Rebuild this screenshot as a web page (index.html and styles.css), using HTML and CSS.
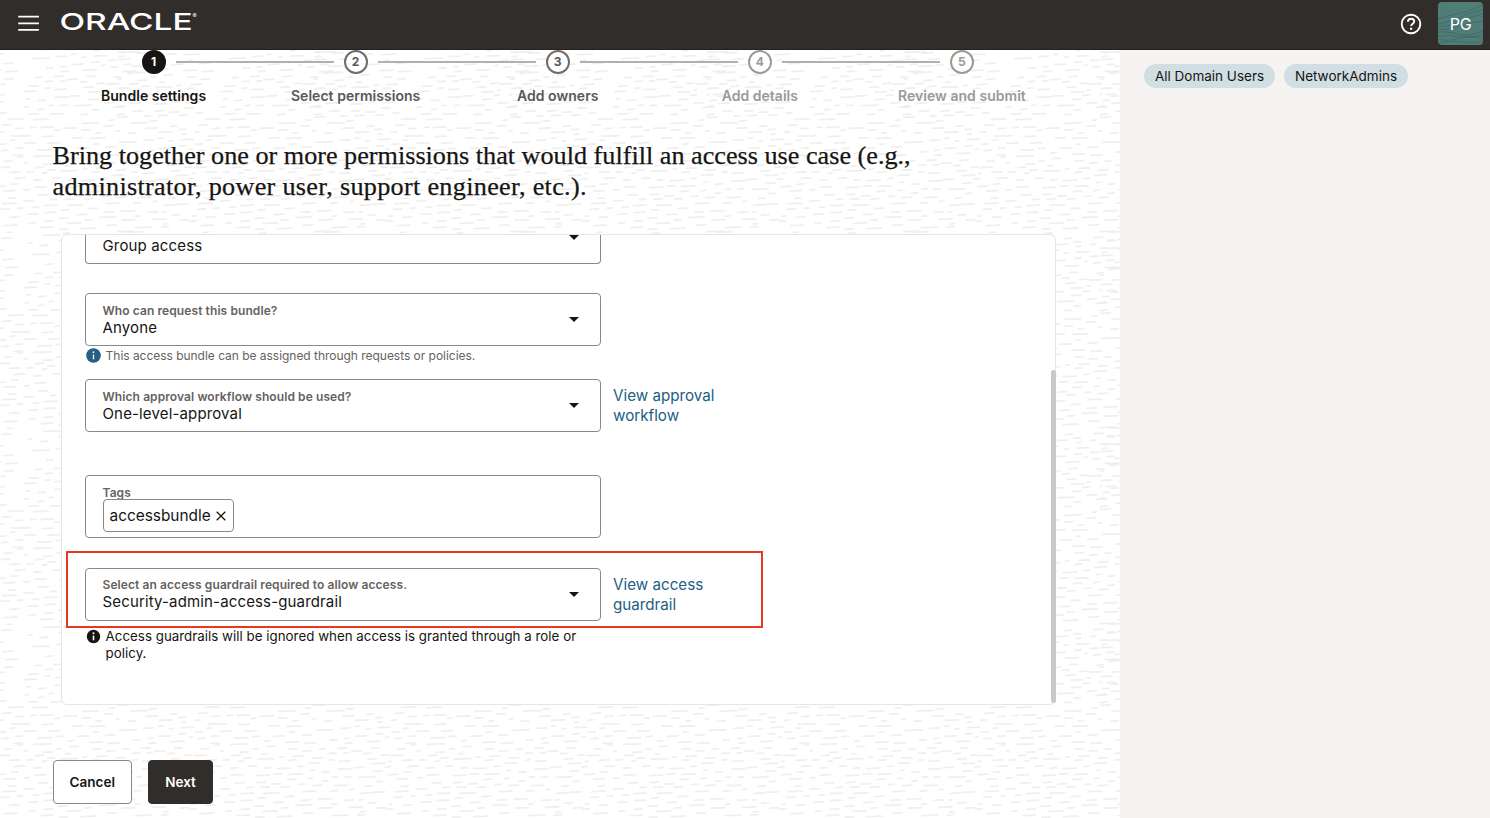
FILE: index.html
```
<!DOCTYPE html>
<html lang="en">
<head>
<meta charset="utf-8">
<title>Create access bundle</title>
<link rel="stylesheet" href="styles.css">
</head>
<body>
<header class="topbar">
  <svg class="menu" width="22" height="16" viewBox="0 0 22 16"><path d="M.2 1.7h20.700M.2 8.300h20.700M.2 14.900h20.700" stroke="#fff" stroke-width="1.700"/></svg>
  <svg class="logo" width="137" height="22" viewBox="0 0 137 22" fill="#fff"><text class="word" x="-1.500" y="18.700" textLength="133" lengthAdjust="spacingAndGlyphs">ORACLE</text><text class="reg" x="131.500" y="6.500">®</text></svg>
  <svg class="help" width="22" height="22" viewBox="0 0 22 22" fill="none" stroke="#fff" stroke-width="1.900"><circle cx="11" cy="11" r="9.300"/><path d="M7.900 8.800C8 6.800 9.300 5.700 11.100 5.700c1.900 0 3.100 1.100 3.100 2.700 0 2.300-3 2.300-3 4.700"/><circle cx="11.100" cy="15.700" r="1.200" fill="#fff" stroke="none"/></svg>
  <div class="avatar">
    <svg width="45" height="43" viewBox="0 0 45 43" fill="none" stroke="#426c68" stroke-width="1"><path d="M0 22q12-2 22-7t23-7M0 25q14-1 24-6t21-7M0 17q9-3 19-5t26-9M0 28q12 0 22-4t23-5M0 30q10-1 20 2t25-3M0 34q14-1 25 1t20-3M0 37q10 3 22-1t23 1M0 41q14-3 25-1t20-1"/></svg>
    <span>PG</span>
  </div>
</header>
<div class="page">
  <main class="main">
    <svg class="texture" width="1120" height="768"><defs><pattern id="dashes" x="220" y="656" width="196.500" height="196" patternUnits="userSpaceOnUse"></pattern></defs><rect width="1120" height="768" fill="url(#dashes)"/></svg>
    <ol class="steps">
      <li class="step current"><span class="num">1</span><span class="name">Bundle settings</span></li>
      <li class="step"><span class="num">2</span><span class="name">Select permissions</span></li>
      <li class="step"><span class="num">3</span><span class="name">Add owners</span></li>
      <li class="step later"><span class="num">4</span><span class="name">Add details</span></li>
      <li class="step later"><span class="num">5</span><span class="name">Review and submit</span></li>
    </ol>
    <h1 class="title"><span class="l1">Bring together one or more permissions that would fulfill an access use case (e.g.,</span><br><span class="l2">administrator, power user, support engineer, etc.).</span></h1>
    <section class="card">
      <div class="field cut"><span class="value">Group access</span><i class="arrow"></i></div>
      <div class="field who"><span class="label">Who can request this bundle?</span><span class="value">Anyone</span><i class="arrow"></i></div>
      <p class="hint"><svg width="15" height="15" viewBox="0 0 15 15"><circle cx="7.500" cy="7.500" r="7.300" fill="#226084"/><path d="M7.500 6.500v4.800" stroke="#fff" stroke-width="1.300"/><circle cx="7.500" cy="4.200" r=".9" fill="#fff"/></svg><span>This access bundle can be assigned through requests or policies.</span></p>
      <div class="row">
        <div class="field"><span class="label">Which approval workflow should be used?</span><span class="value">One-level-approval</span><i class="arrow"></i></div>
        <a class="link">View approval<br>workflow</a>
      </div>
      <div class="field tags"><span class="label">Tags</span><span class="tag"><span>accessbundle</span><svg width="10" height="10" viewBox="0 0 10 10"><path d="M.7.7l8.600 8.600M9.300.7L.7 9.300" stroke="#161513" stroke-width="1.300"/></svg></span></div>
      <div class="highlight row">
        <div class="field"><span class="label">Select an access guardrail required to allow access.</span><span class="value">Security-admin-access-guardrail</span><i class="arrow"></i></div>
        <a class="link">View access<br>guardrail</a>
      </div>
      <p class="hint dark"><svg width="15" height="15" viewBox="0 0 15 15"><circle cx="7.500" cy="7.500" r="6.700" fill="#161513"/><path d="M7.500 6.500v4.800" stroke="#fff" stroke-width="1.600"/><circle cx="7.500" cy="4.200" r="1" fill="#fff"/></svg><span>Access guardrails will be ignored when access is granted through a role or<br>policy.</span></p>
      <i class="thumb"></i>
    </section>
    <div class="actions"><button class="btn">Cancel</button><button class="btn primary">Next</button></div>
  </main>
  <aside class="side"><span class="chip">All Domain Users</span><span class="chip c2">NetworkAdmins</span></aside>
</div>
<script src="texture.js"></script>
</body>
</html>
```
FILE: styles.css
```
* { box-sizing: border-box; }
body { margin: 0; width: 1490px; height: 818px; overflow: hidden; font-family: Inter, "Liberation Sans", sans-serif; color: #161513; background: #fff; }
.topbar { display: flex; height: 50px; background: #312d2a; padding-left: 18px; border-bottom: 1px solid #24211f; }
.menu { margin-top: 15px; }
.logo { margin: 11px 0 0 21px; overflow: visible; }
.word { font: 500 23.4px Inter, sans-serif; }
.reg { font: 6px Inter, sans-serif; }
.help { margin: 12.5px 16px 0 auto; }
.avatar { display: grid; place-items: center; width: 45px; height: 43px; margin: 2px 7px 0 0; border-radius: 4px; background: #517d79; overflow: hidden; color: #fff; font-size: 16px; }
.avatar > * { grid-area: 1 / 1; }
.avatar span { z-index: 1; letter-spacing: -.3px; }
.page { display: flex; height: 768px; }
.main { position: relative; width: 1120px; overflow: hidden; display: flex; flex-direction: column; }
.texture { position: absolute; inset: 0; }
.main > :not(.texture) { position: relative; }
.steps { display: flex; list-style: none; margin: 0 0 0 52.5px; padding: 0; height: 62px; }
.step { position: relative; width: 202.1px; display: flex; flex-direction: column; align-items: center; color: #5a5856; }
.num { width: 24px; height: 24px; border: 2px solid #6f6d6b; border-radius: 50%; background: #fff; font-size: 12px; font-weight: 700; line-height: 20px; text-align: center; }
.name { margin-top: 13px; font-size: 14px; line-height: 18px; font-weight: 600; letter-spacing: .03px; white-space: nowrap; }
.step:not(:last-child)::after { content: ""; position: absolute; top: 10.5px; left: 123px; width: 158px; height: 2px; background: #b1b0af; }
.current { color: #161513; }
.current .num { background: #161513; border-color: #161513; color: #fff; }
.later { color: #9b9a99; }
.later .num { border-color: #9b9a99; }
.title { margin: 28px 0 0 52.5px; font: 400 26.2px/31px "Liberation Serif", serif; -webkit-text-stroke: .25px #161513; white-space: nowrap; }
.l2 { letter-spacing: .3px; }
.card { width: 995px; height: 471px; margin: 32px 0 0 60.5px; padding-left: 23.5px; border: 1px solid #e6e6e5; border-radius: 6px; background: #fff; }
.field { position: relative; display: flex; flex-direction: column; width: 516px; height: 53px; padding: 9px 16px 0 16.5px; border: 1px solid #8b8988; border-radius: 4px; }
.cut { height: 29px; padding-top: 1px; border-top: 0; border-radius: 0 0 4px 4px; }
.who { margin-top: 29px; }
.label { font-size: 12px; line-height: 15px; font-weight: 600; letter-spacing: .09px; color: #65625f; white-space: nowrap; }
.value { font-size: 15px; line-height: 19px; letter-spacing: .15px; white-space: nowrap; }
.arrow { position: absolute; right: 21px; top: 23px; border: 5px solid transparent; border-top-color: #161513; border-bottom: 0; }
.cut .arrow { top: 0; }
.hint { display: flex; gap: 5px; margin: 1px 0 0; padding-left: .6px; font-size: 12px; line-height: 17px; letter-spacing: -.03px; color: #65625f; white-space: nowrap; }
.hint svg { margin-top: 1px; }
.row { display: flex; gap: 12px; }
.row:not(.highlight) { margin-top: 15px; }
.link { margin-top: 7px; color: #226084; font-size: 15.2px; line-height: 20px; white-space: nowrap; }
.tags { height: 63px; margin-top: 43px; padding-top: 9px; }
.tag { display: flex; align-items: center; gap: 5.500px; width: 131px; height: 33px; margin-top: -1px; border: 1px solid #8b8988; border-radius: 4px; padding-left: 6px; font-size: 15.4px; }
.highlight { width: 697px; height: 77px; margin: 13px 0 0 -19px; padding: 15px 0 0 17px; border: 2px solid #e8391f; }
.highlight .field { padding-top: 8px; }
.dark { margin-top: 0; font-size: 13.3px; letter-spacing: .03px; color: #161513; }
.thumb { position: absolute; right: -1px; top: 135px; width: 5px; height: 333px; border-radius: 3px; background: #c9c9c9; }
.actions { display: flex; gap: 16px; margin: 55px 0 0 52.5px; }
.btn { width: 79.5px; height: 44px; padding: 0; border: 1px solid #8b8988; border-radius: 4px; background: #fff; color: #161513; font: 600 13.5px Inter, sans-serif; }
.primary { width: 65px; background: #312d2a; border-color: #312d2a; color: #fff; }
.side { width: 370px; padding: 14px 24px; background: #f5f4f2; display: flex; gap: 9px; }
.chip { height: 24px; width: 131px; border-radius: 12px; background: #d1dee4; font-size: 13.5px; line-height: 24px; text-align: center; white-space: nowrap; }
.c2 { width: 124px; }
```
FILE: texture.js
```
// Short strokes of the background tile: x, y, length, in thirds of a pixel.
var strokes = [
  [30,4,44],[258,6,14],[322,14,50],[176,15,48],[380,8,20],[545,3,46],[242,23,26],[440,24,20],[526,21,26],
  [22,28,16],[52,27,36],[120,30,40],[94,36,14],[176,35,24],[368,30,34],[278,38,10],[466,34,20],[566,31,24],
  [218,44,14],[314,45,22],[406,42,40],[514,42,16],[474,48,12],[556,53,52],[0,53,18],[56,55,32],[148,59,28],
  [200,60,44],[404,60,14],[362,66,28],[474,64,36],[438,68,10],[550,66,14],[0,75,36],[76,74,32],[288,72,50],
  [210,78,14],[516,78,20],[468,83,20],[44,95,40],[98,91,20],[162,90,32],[246,87,28],[408,90,32],[566,90,20],
  [498,93,8],[524,97,20],[134,104,16],[330,101,20],[374,97,14],[198,108,38],[254,111,34],[442,106,38],[560,111,40],
  [32,114,50],[376,111,20],[574,117,12],[140,121,24],[100,128,14],[208,128,24],[298,129,18],[354,126,26],[452,126,24],
  [534,128,20],[0,134,10],[60,138,26],[250,134,24],[394,135,30],[328,141,20],[372,140,14],[432,142,20],[126,143,14],
  [36,148,24],[220,150,30],[484,147,20],[512,148,36],[178,153,12],[72,156,22],[114,158,48],[278,155,28],[444,158,26],
  [10,161,18],[206,162,22],[328,161,14],[548,162,30],[56,165,12],[358,165,32],[506,166,8],[266,171,34],[458,172,36],
  [0,180,4],[88,180,22],[234,181,16],[564,180,26],[32,185,20],[134,185,18],[172,187,40],[402,184,30],[494,182,18],
  [356,188,40],[272,193,10],[460,195,26],[306,198,22],[552,198,20],[162,203,24],[206,204,40],[34,206,34],[506,205,28],
  [110,208,38],[338,213,14],[374,213,18],[418,213,48],[0,215,18],[264,217,14],[532,218,32],[202,220,24],[306,225,18],
  [468,226,18],[46,230,28],[112,229,24],[156,233,26],[236,235,18],[278,238,28],[344,238,38],[436,240,20],[544,240,20],
  [80,244,18],[122,243,26],[184,242,24],[0,248,30],[390,250,10],[248,256,38],[332,254,20],[458,258,36],[526,256,40],
  [62,262,38],[132,261,44],[422,261,30],[28,267,18],[196,271,26],[116,275,20],[522,273,24],[572,270,16],[294,278,40],
  [64,283,32],[374,282,28],[244,282,26],[418,281,10],[14,288,28],[162,289,28],[336,294,14],[228,297,46],[446,290,22],
  [106,300,26],[506,294,10],[548,297,26],[184,305,20],[296,305,40],[388,303,40],[64,309,24],[470,305,26],[18,315,16],
  [130,315,42],[420,317,14],[498,309,20],[250,321,28],[532,322,38],[52,328,36],[172,331,44],[336,328,48],[108,333,24],[414,326,20]
];
function dash(x, y, w) {
  return '<path d="M' + (x / 3).toFixed(1) + " " + (y / 3 + 0.4).toFixed(1) + "l" + (w / 3).toFixed(1) + ' -.5"/>';
}
var out = "";
strokes.forEach(function (s) {
  out += dash(s[0], s[1], s[2]);
  // The lower part of the tile repeats the first rows, shifted sideways.
  if (s[1] < 250) out += dash((s[0] + 283) % 545, s[1] + 337, s[2]);
});
var tile = document.getElementById("dashes");
tile.setAttribute("fill", "none");
tile.setAttribute("stroke", "#efefee");
tile.setAttribute("stroke-width", "1.8");
tile.setAttribute("stroke-linecap", "round");
tile.innerHTML = out;
```
